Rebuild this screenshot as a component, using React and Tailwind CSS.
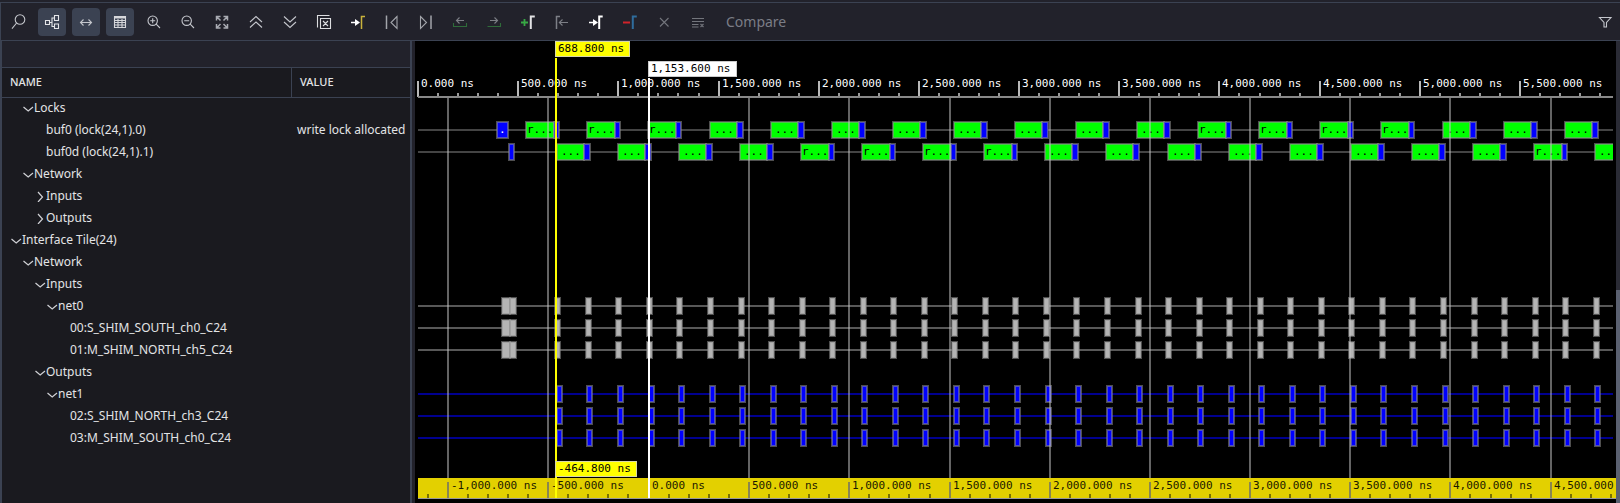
import React from "react";

const PX_PER_NS = 0.20036;
const ORIGIN = 3;
const PRIMARY = 141;
const ZERO = 234;

const range = (n) => Array.from({ length: n }, (_, i) => i);
const formatNs = (n) =>
  n.toLocaleString("en-US", { minimumFractionDigits: 3, maximumFractionDigits: 3 }) + " ns";
const toX = (zero, ns) =>
  ns < 0 ? Math.floor(zero + ns * PX_PER_NS) : Math.round(zero + ns * PX_PER_NS);

/* ---------- toolbar icons ---------- */

function Icon({ children, className = "text-[#c4c6cc]" }) {
  return (
    <svg viewBox="0 0 20 20" className={"size-5 " + className} fill="none" stroke="currentColor" strokeWidth="1.1" aria-hidden="true">
      {children}
    </svg>
  );
}

const Search = () => (
  <Icon><circle cx="12" cy="7.5" r="4.8" /><path d="M8.6 11 4 16.6" /></Icon>
);
const Tree = () => (
  <Icon className="text-[#e4e5e8]">
    <path d="M3.5 8.5h4v4h-4zM12.5 3.5h4v5h-4zM12.5 12h4v4.5h-4zM7.5 10.5H10M12.5 6H10v8.500h2.500" />
  </Icon>
);
const Widen = () => (
  <Icon><path d="M4.500 10.500h11M7.500 7.500l-3 3 3 3M12.500 7.500l3 3-3 3" /></Icon>
);
const Grid = () => (
  <Icon className="text-[#d6d7db]">
    <path d="M4.500 4.500h11v11h-11zM4.500 8.500h11M4.500 10.500h11M4.500 13h11M8 7v8.500M12 7v8.500" />
    <path d="M4.500 5.500h11" strokeWidth="2" />
  </Icon>
);
const ZoomIn = () => (
  <Icon><circle cx="8.700" cy="8.700" r="4.700" /><path d="M12.200 12.200 16 16M6.200 8.700h5M8.700 6.200v5" /></Icon>
);
const ZoomOut = () => (
  <Icon><circle cx="8.700" cy="8.700" r="4.700" /><path d="M12.200 12.200 16 16M6.200 8.700h5" /></Icon>
);
const Fit = () => (
  <Icon className="text-[#a9abb2]">
    <path
      strokeWidth="1.500"
      d="M8.500 4.500h-4v4M11.500 4.500h4v4M8.500 16h-4v-4M11.500 16h4v-4M5 5l3.500 3.500M15 5l-3.500 3.500M5 15.500l3.500-3.500M15 15.500l-3.500-3.500"
    />
  </Icon>
);
const ChevronsUp = () => (
  <Icon><path d="m4 10 6-5.500 6 5.500M4 15.500l6-5.500 6 5.500" /></Icon>
);
const ChevronsDown = () => (
  <Icon><path d="m4 4.500 6 5.500 6-5.500M4 10l6 5.500 6-5.500" /></Icon>
);
const CloseAll = () => (
  <Icon className="text-[#dcdde0]">
    <path d="M3.500 15.500v-12h12M6.500 6.500h10v10h-10zM9 9l5 5M14 9l-5 5" />
  </Icon>
);
const ArrowIn = () => (
  <g>
    <path d="M3 10.500h5" strokeWidth="1.500" />
    <path d="m7 7 5 3.500-5 3.500z" fill="currentColor" stroke="none" />
  </g>
);
const ToEdge = () => (
  <Icon className="text-white">
    <ArrowIn />
    <path d="M13.500 17V4.500h3.500" stroke="#c9b33c" strokeWidth="1.500" />
  </Icon>
);
const First = () => (
  <Icon className="text-[#a3a5ab]"><path d="M4.500 3.500v13.500" strokeWidth="1.500" /><path d="m15 4.500-6 6 6 6z" /></Icon>
);
const Last = () => (
  <Icon className="text-[#a3a5ab]"><path d="M15 3.500v13.500" strokeWidth="1.500" /><path d="m4.500 4.500 6 6-6 6z" /></Icon>
);
const TrayLeft = () => (
  <Icon className="text-[#7d7f86]">
    <path d="M3.500 11v3.500h13V11" stroke="#2f6b3a" />
    <path d="M6.500 8.500H14M9.500 5.500l-3 3 3 3" />
  </Icon>
);
const TrayRight = () => (
  <Icon className="text-[#7d7f86]">
    <path d="M3.500 14.500h13V11" stroke="#2f6b3a" />
    <path d="M6 8.500h7.500M10.500 5.500l3 3-3 3" />
  </Icon>
);
const AddMarker = () => (
  <Icon>
    <path d="M3 10.500h7M6.500 7v7" stroke="#38a845" strokeWidth="1.800" />
    <path d="M12.800 17V4.500h4" stroke="#e2e2e4" strokeWidth="2" />
  </Icon>
);
const PrevMarker = () => (
  <Icon className="text-[#7d7f86]">
    <path d="M4.500 17V4.500h3.500" strokeWidth="1.500" />
    <path d="M7 10.500h9M10.500 7.500l-3.200 3 3.200 3" />
  </Icon>
);
const NextMarker = () => (
  <Icon className="text-white">
    <ArrowIn />
    <path d="M13.200 17V4.500h3.500" strokeWidth="2" />
  </Icon>
);
const RemoveMarker = () => (
  <Icon>
    <path d="M3 10.500h7" stroke="#d1232a" strokeWidth="2" />
    <path d="M12.800 17V4.500h4" stroke="#2f6c9c" strokeWidth="2" />
  </Icon>
);
const Cross = () => (
  <Icon className="text-[#73757c]"><path d="m6 6 8.500 8.500M14.500 6 6 14.500" /></Icon>
);
const ClearList = () => (
  <Icon className="text-[#73757c]">
    <path d="M4 6.500h12M4 9.500h12M4 12.500h6.500M4 15h6.500M12.500 12l3 3M15.500 12l-3 3" />
  </Icon>
);
const Funnel = () => (
  <Icon><path d="M4.500 5.500h11.500l-4.500 5v4.500h-2.500v-4.500z" /></Icon>
);

const TOOLS = [
  { label: "Find", icon: Search },
  { label: "Hierarchy", icon: Tree, on: true },
  { label: "Fit columns", icon: Widen, on: true },
  { label: "Table", icon: Grid, on: true },
  { label: "Zoom in", icon: ZoomIn },
  { label: "Zoom out", icon: ZoomOut },
  { label: "Zoom to fit", icon: Fit },
  { label: "Collapse all", icon: ChevronsUp },
  { label: "Expand all", icon: ChevronsDown },
  { label: "Close all", icon: CloseAll },
  { label: "Go to cursor", icon: ToEdge },
  { label: "Go to start", icon: First },
  { label: "Go to end", icon: Last },
  { label: "Previous transition", icon: TrayLeft, off: true },
  { label: "Next transition", icon: TrayRight, off: true },
  { label: "Add marker", icon: AddMarker },
  { label: "Previous marker", icon: PrevMarker, off: true },
  { label: "Next marker", icon: NextMarker },
  { label: "Remove marker", icon: RemoveMarker },
  { label: "Delete", icon: Cross, off: true },
  { label: "Clear list", icon: ClearList, off: true },
];

function Toolbar() {
  return (
    <div role="toolbar" aria-label="Waveform tools" className="flex items-center gap-1.5 border-y border-l border-[#3b4252] bg-[#22222b] pt-[5px] pr-px pb-1 pl-[3px]">
      {TOOLS.map(({ label, icon: Glyph, on, off }) => (
        <button
          key={label}
          type="button"
          aria-label={label}
          aria-pressed={on}
          disabled={off}
          className={"flex size-7 shrink-0 items-center justify-center rounded " + (on ? "bg-[#3b4252]" : "")}
        >
          <Glyph />
        </button>
      ))}
      <button type="button" disabled className="ml-1 px-1 text-sm leading-5 text-[#7b7d86]">
        Compare
      </button>
      <button type="button" aria-label="Filter" className="ml-auto flex size-7 items-center justify-center">
        <Funnel />
      </button>
    </div>
  );
}

/* ---------- signal tree ---------- */

const SIGNALS = [
  { name: "Locks", pad: "pl-5", open: true },
  { name: "buf0 (lock(24,1).0)", pad: "pl-11", value: "write lock allocated" },
  { name: "buf0d (lock(24,1).1)", pad: "pl-11" },
  { name: "Network", pad: "pl-5", open: true },
  { name: "Inputs", pad: "pl-8", open: false },
  { name: "Outputs", pad: "pl-8", open: false },
  { name: "Interface Tile(24)", pad: "pl-2", open: true },
  { name: "Network", pad: "pl-5", open: true },
  { name: "Inputs", pad: "pl-8", open: true },
  { name: "net0", pad: "pl-11", open: true },
  { name: "00:S_SHIM_SOUTH_ch0_C24", pad: "pl-17" },
  { name: "01:M_SHIM_NORTH_ch5_C24", pad: "pl-17" },
  { name: "Outputs", pad: "pl-8", open: true },
  { name: "net1", pad: "pl-11", open: true },
  { name: "02:S_SHIM_NORTH_ch3_C24", pad: "pl-17" },
  { name: "03:M_SHIM_SOUTH_ch0_C24", pad: "pl-17" },
];

function Twisty({ open }) {
  return (
    <button type="button" aria-label={open ? "Collapse" : "Expand"} className="flex w-3 shrink-0 justify-center">
      <svg viewBox="0 0 12 12" className="size-3" fill="none" stroke="#d0d1d5" strokeWidth="1.200" aria-hidden="true">
        <path d={open ? "m1.500 5 4.700 4L11 5" : "m4 2 4.500 5L4 12"} />
      </svg>
    </button>
  );
}

function SignalTree() {
  return (
    <section className="flex w-[412px] shrink-0 flex-col border-x-2 border-[#3b4252] bg-[#1a1a1f]">
      <div className="h-[26px] shrink-0 bg-[#22222b]" />
      <table className="w-full table-fixed border-separate border-spacing-0 text-xs text-[#e3e4e6]">
        <colgroup>
          <col className="w-[290px]" />
          <col />
        </colgroup>
        <thead>
          <tr className="h-[31px] text-left text-[11px]">
            <th className="border-y border-r border-[#3b4252] px-2 py-0 font-medium">NAME</th>
            <th className="border-y border-[#3b4252] px-2 py-0 font-medium">VALUE</th>
          </tr>
        </thead>
        <tbody>
          {SIGNALS.map((s, i) => (
            <tr key={i} className="h-[22px] align-top leading-5">
              <td className={"py-0 pr-0 " + s.pad}>
                <div className="flex items-center whitespace-nowrap">
                  {s.open !== undefined && <Twisty open={s.open} />}
                  {s.name}
                </div>
              </td>
              <td className="py-0 pr-0 pl-[5px] whitespace-nowrap">{s.value}</td>
            </tr>
          ))}
        </tbody>
      </table>
    </section>
  );
}

/* ---------- waveform ---------- */

const WIDE_A = [0, 1, 2, 11, 12, 13, 14];
const WIDE_B = [4, 5, 6, 7, 16];

function Box({ x, y, w, fill, text, textX = 4 }) {
  return (
    <g>
      <rect x={x} y={y - 8} width={w} height="16" fill={fill} />
      <rect x={x} y={y - 8} width={w} height="16" fill="none" stroke="#909090" strokeOpacity="0.55" strokeWidth="2" />
      {text && (
        <text x={x + textX} y={y + 3} fill={fill === "#0000ff" ? "#fff" : "#000"}>{text}</text>
      )}
    </g>
  );
}

function LockRow({ y, start, wide, count, lastText = "..." }) {
  return (
    <g>
      {range(count).map((k) => {
        const x = Math.floor(start + 61.08 * k);
        const isWide = wide.includes(k);
        const w = isWide ? 28 : 27;
        const label = k === count - 1 ? lastText : isWide ? "r..." : "...";
        return (
          <g key={k}>
            <Box x={x} y={y} w={w} fill="#00ff00" text={label} textX={isWide ? 1 : 4} />
            <Box x={x + w} y={y} w={33 - w} fill="#0000ff" />
          </g>
        );
      })}
    </g>
  );
}

function Ruler({ y, labelY, zero, from, to, color, textColor, tick, lastLabel }) {
  return (
    <g>
      {range((to - from) / 100 + 1).map((i) => {
        const ns = from + i * 100;
        const x = toX(zero, ns);
        const major = ns % 500 === 0;
        const last = ns + 500 > to;
        if (x < ORIGIN) return null;
        return (
          <g key={ns}>
            <rect x={x - 1} y={major ? y - 16 : y - 4} width="2" height={major ? 16 : 4} fill={major ? color : tick} />
            {major && (
              <text x={x + 3} y={labelY} fill={textColor}>{last && lastLabel ? lastLabel : formatNs(ns)}</text>
            )}
          </g>
        );
      })}
    </g>
  );
}

function Flag({ x, y, w, fill, border, children }) {
  return (
    <g>
      <rect x={x - 0.5} y={y + 0.5} width={w} height="15" fill={fill} stroke={border} />
      <text x={x + 2} y={y + 11} fill="#000">{children}</text>
    </g>
  );
}

const GRAY_ROWS = [265, 287, 309];
const BLUE_ROWS = [353, 375, 397];

function Waveform() {
  return (
    <section aria-label="Waveform" className="relative min-w-0 flex-1 bg-black">
      <svg className="block h-full w-full font-['DejaVu_Sans_Mono',monospace] text-[11px]">
        {[89, 111].map((y) => (
          <rect key={y} x={ORIGIN} y={y - 1} width="100%" height="2" fill="#444" />
        ))}
        {GRAY_ROWS.map((y) => (
          <rect key={y} x={ORIGIN} y={y - 1} width="100%" height="2" fill="#585858" />
        ))}
        {BLUE_ROWS.map((y) => (
          <rect key={y} x={ORIGIN} y={y - 1} width="100%" height="2" fill="#000090" />
        ))}

        <Box x={82} y={89} w={11} fill="#0000ff" text="." textX={2} />
        <Box x={94} y={111} w={5} fill="#0000ff" />
        <LockRow y={89} start={111.800} wide={WIDE_A} count={18} />
        <LockRow y={111} start={142.200} wide={WIDE_B} count={18} lastText=".." />

        {GRAY_ROWS.map((y) => (
          <g key={y}>
            <Box x={87} y={y} w={8} fill="#b4b4b4" />
            <Box x={95} y={y} w={6} fill="#b4b4b4" />
            {range(35).map((k) => (
              <Box key={k} x={Math.floor(140.800 + 30.540 * k)} y={y} w={5} fill="#b4b4b4" />
            ))}
          </g>
        ))}
        {BLUE_ROWS.map((y) => (
          <g key={y}>
            {range(35).map((k) => (
              <Box key={k} x={Math.floor(142.400 + 30.540 * k)} y={y} w={5} fill="#0000ff" />
            ))}
          </g>
        ))}

        {range(14).map((i) => (
          <rect key={i} x={toX(ZERO, (i - 2) * 500) - 1} y="56" width="2" height="381" fill="#c8c8c8" fillOpacity="0.5" />
        ))}

        <Ruler y={56} labelY={46} zero={ORIGIN} from={0} to={5900} color="#b8b8b8" textColor="#fff" tick="#999" />
        <rect x={ORIGIN} y="55" width="100%" height="2" fill="#888" />

        <rect x="100%" y="0" width="3" height="437" fill="#000" transform="translate(-3 0)" />

        <rect x={ORIGIN} y="437" width="100%" height="20" fill="#e3d000" />
        <Ruler y={457} labelY={448} zero={ZERO} from={-1100} to={4800} color="#8a8650" textColor="#1a1800" tick="#7a7000" lastLabel="4,500.000" />
        <rect x={ORIGIN} y="457" width="100%" height="1" fill="#999" />

        <rect x={PRIMARY - 1} y="17" width="2" height="440" fill="#ffff00" />
        <rect x={ZERO - 1} y="37" width="2" height="420" fill="#fff" />
        <Flag x={PRIMARY} y={0} w={74} fill="#ffff00" border="#d8d8a8">688.800 ns</Flag>
        <Flag x={ZERO} y={20} w={88} fill="#fff" border="#ccc">1,153.600 ns</Flag>
        <Flag x={PRIMARY} y={420} w={81} fill="#ffff00" border="#d8d8a8">-464.800 ns</Flag>
      </svg>
    </section>
  );
}

export default function App() {
  return (
    <main className="flex h-screen flex-col bg-[#22222b] pt-0.5 font-['Noto_Sans',sans-serif]">
      <Toolbar />
      <div className="flex min-h-0 flex-1">
        <SignalTree />
        <div className="w-[3px] shrink-0 bg-[#22222b]" />
        <Waveform />
        <div className="flex w-1 shrink-0 flex-col justify-end bg-[#2a2b35]">
          <div className="h-[46%] bg-[#5a6070]" />
        </div>
      </div>
    </main>
  );
}
